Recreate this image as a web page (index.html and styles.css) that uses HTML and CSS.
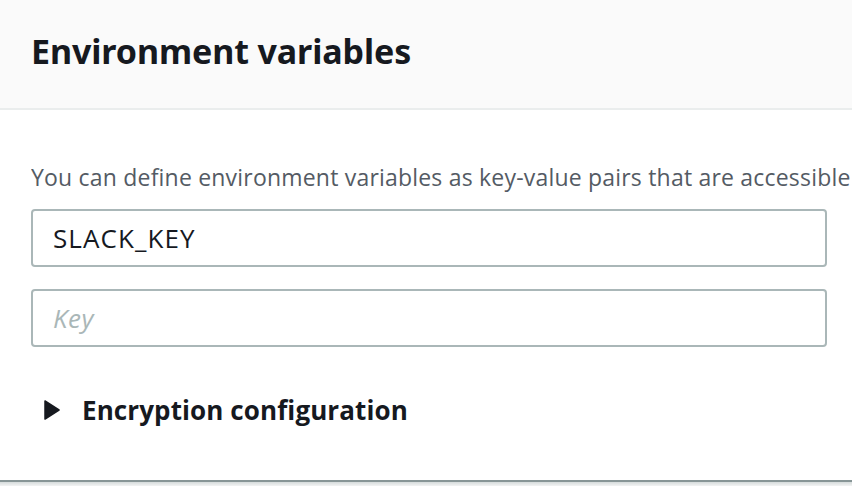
FILE: index.html
```html
<!DOCTYPE html>
<html>
<head>
<meta charset="utf-8">
<link rel="stylesheet" href="styles.css">
</head>
<body>
<div class="panel">
  <div class="panel-header">
    <h2 class="title">Environment variables</h2>
  </div>
  <div class="panel-body">
    <p class="desc">You can define environment variables as key-value pairs that are accessible from your function code.</p>
    <div class="field"><input class="input" type="text" value="SLACK_KEY"></div>
    <div class="field"><input class="input" type="text" placeholder="Key"></div>
    <div class="expander">
      <svg class="caret" width="16" height="20" viewBox="0 0 16 20"><path d="M1 1 L15 10 L1 19 Z" fill="#16191f" stroke="#16191f" stroke-width="1.5" stroke-linejoin="round"/></svg>
      <span class="expander-label">Encryption configuration</span>
    </div>
  </div>
  <div class="panel-foot"></div>
</div>
</body>
</html>
```
FILE: styles.css
```css
html, body {
  margin: 0;
  padding: 0;
  background: #ffffff;
  overflow: hidden;
}
.panel {
  width: 852px;
  height: 486px;
  font-family: "Open Sans", "Noto Sans", sans-serif;
  color: #16191f;
  display: flex;
  flex-direction: column;
  overflow: hidden;
}
.panel-header {
  background: #fafafa;
  height: 108px;
  border-bottom: 2px solid #eaeded;
  box-sizing: content-box;
  display: flex;
  align-items: center;
  padding-left: 31px;
}
.title {
  margin: 0 0 6px 0;
  font-family: "Noto Sans", sans-serif;
  font-weight: 700;
  font-size: 34px;
  letter-spacing: -0.1px;
  line-height: 1;
  color: #16191f;
}
.panel-body {
  padding: 52px 25px 0 31px;
  flex: 1;
  white-space: nowrap;
}
.desc {
  margin: 0 -25px 17px 0;
  font-size: 23px;
  letter-spacing: 0.2px;
  line-height: 30px;
  color: #545b64;
  overflow: hidden;
}
.field {
  margin-bottom: 22px;
}
.input {
  display: block;
  width: 796px;
  height: 58px;
  box-sizing: border-box;
  border: 2px solid #aab7b8;
  border-radius: 4px;
  padding: 0 20px;
  font-family: "Open Sans", sans-serif;
  font-size: 26px;
  letter-spacing: 1.1px;
  color: #16191f;
  background: #fff;
  outline: none;
}
.input::placeholder {
  color: #aab7b8;
  font-style: italic;
  letter-spacing: 0.5px;
}
.expander {
  display: flex;
  align-items: center;
  margin-top: 45px;
  padding-left: 13px;
}
.caret {
  display: block;
  margin-right: 22px;
}
.expander-label {
  font-weight: 700;
  font-size: 26px;
  letter-spacing: 0.1px;
  color: #16191f;
}
.panel-foot {
  height: 6px;
  border-top: 2px solid #879596;
  background: linear-gradient(#d5dbdb, #f2f3f3);
  box-sizing: border-box;
}
```
